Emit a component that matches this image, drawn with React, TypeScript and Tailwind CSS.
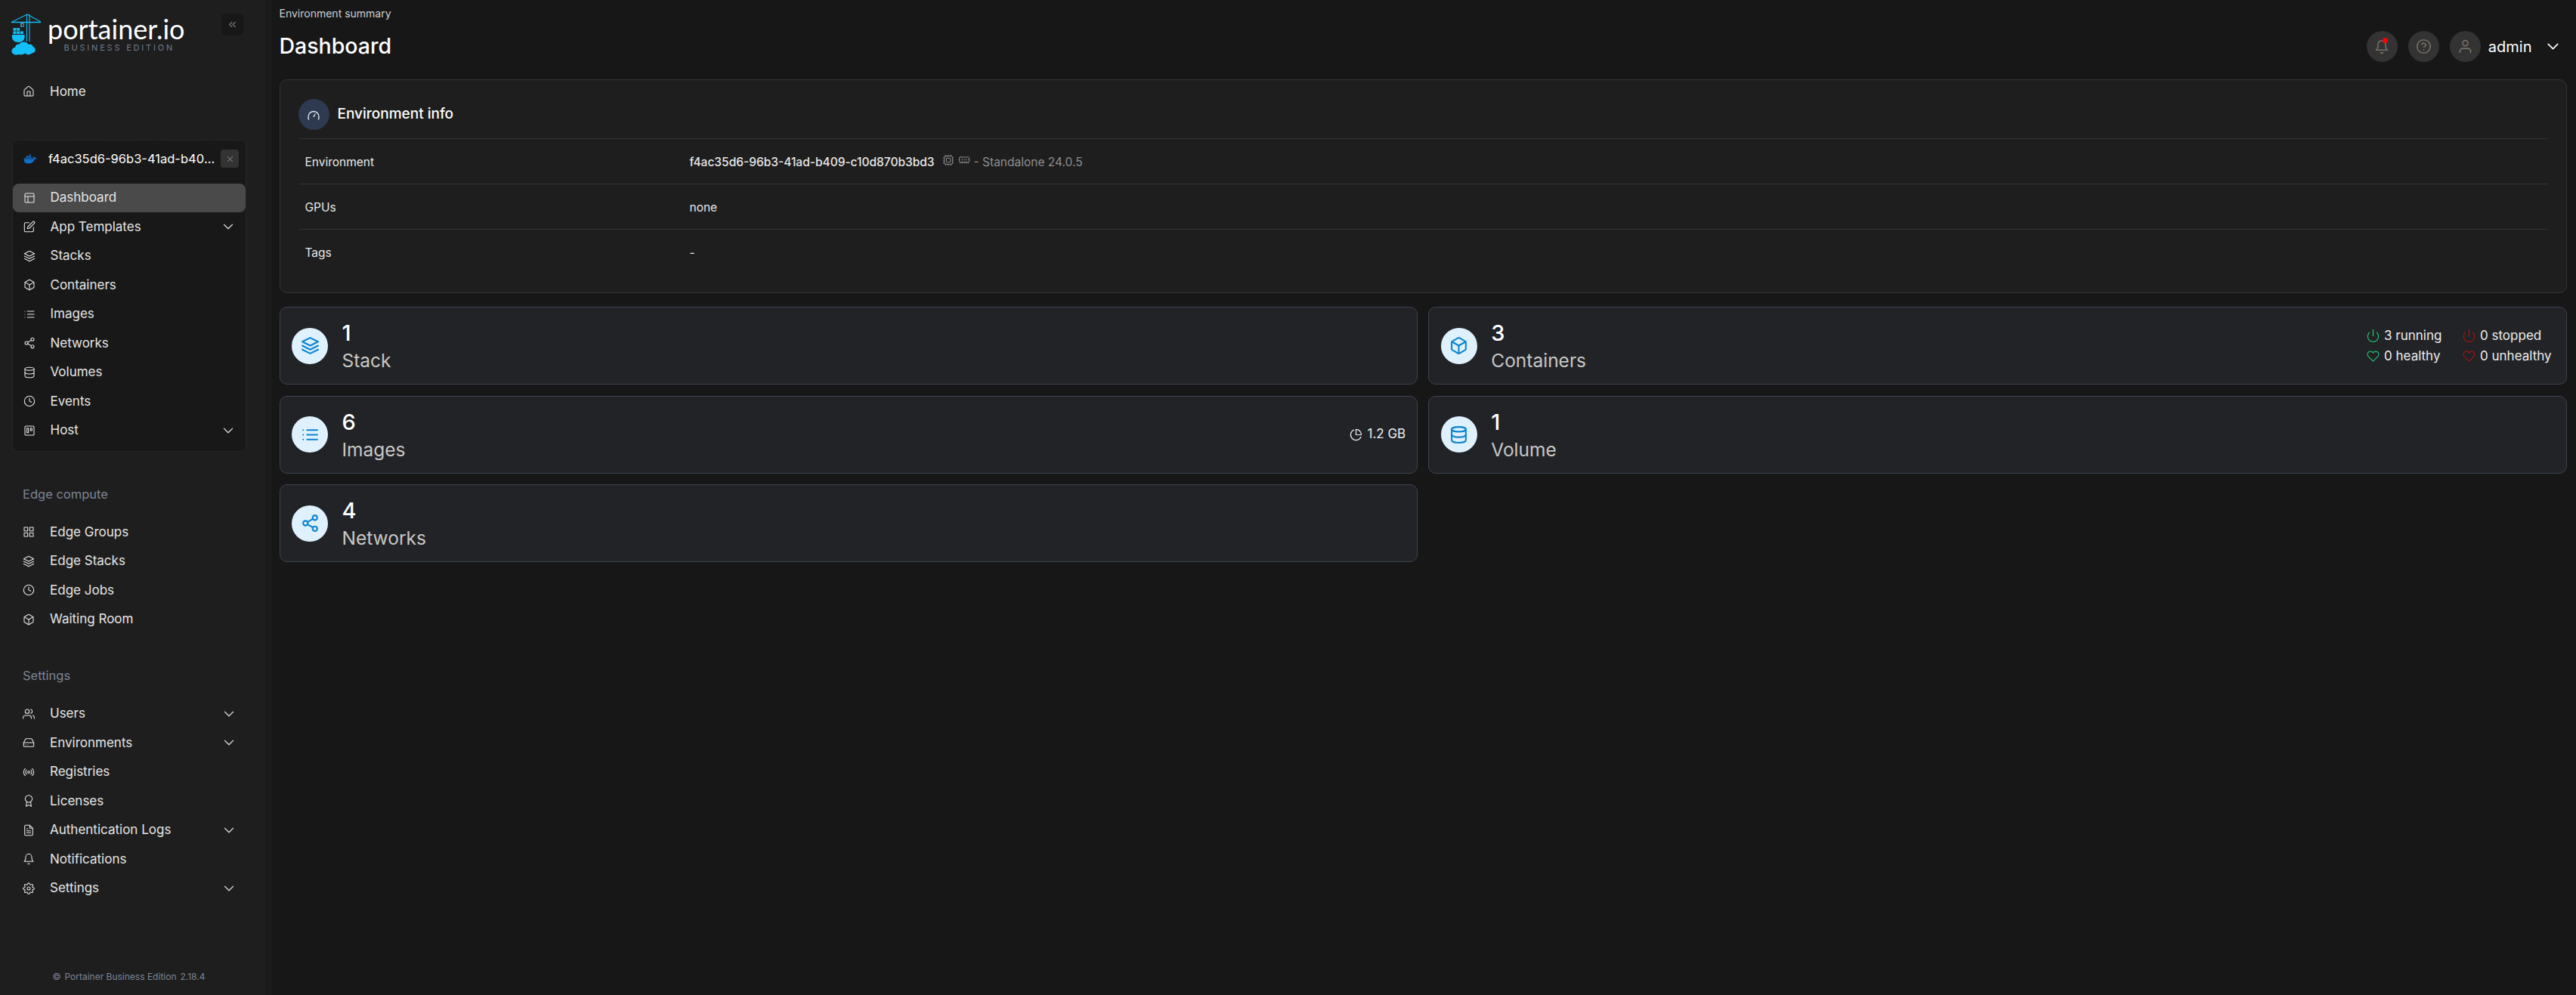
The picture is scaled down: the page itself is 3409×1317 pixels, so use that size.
import type { ReactNode } from "react";
import { Cpu, MemoryStick, House } from "lucide-react";
import { SiDocker } from "react-icons/si";
import {
  FiAward,
  FiBell,
  FiBox,
  FiChevronDown,
  FiChevronsLeft,
  FiClock,
  FiDatabase,
  FiEdit,
  FiFileText,
  FiGrid,
  FiHardDrive,
  FiHeart,
  FiHelpCircle,
  FiLayers,
  FiLayout,
  FiList,
  FiPieChart,
  FiPower,
  FiRadio,
  FiSettings,
  FiShare2,
  FiTrello,
  FiUser,
  FiUsers,
  FiX,
} from "react-icons/fi";

type IconType = React.ComponentType<{ className?: string; strokeWidth?: number }>;

function PortainerLogo() {
  return (
    <svg viewBox="0 0 40 55" className="h-[55px] w-[40px] shrink-0" fill="none">
      {/* crane */}
      <g stroke="#13bef9" strokeWidth="1.1">
        <path d="M0 11.500h39" strokeWidth="1.6" />
        <path d="M21 1 1 11M21 1l18 10" />
        <path d="M20.500 1v36M24 1v36" />
      </g>
      <path d="M13 12v6" stroke="#13bef9" strokeWidth="0.8" />
      <rect x="13" y="13" width="3.500" height="4" fill="none" stroke="#8fdcf8" strokeWidth="0.7" />
      {/* containers */}
      <g fill="#13bef9">
        <rect x="2.500" y="19" width="4" height="3.600" />
        <rect x="7.200" y="19" width="4" height="3.600" />
        <rect x="2.500" y="23.400" width="4" height="3.600" />
        <rect x="7.200" y="23.400" width="4" height="3.600" />
        <rect x="11.900" y="23.400" width="4" height="3.600" />
        {/* boat */}
        <path d="M1 28h16.500v3.500c0 3.500-3 6.500-8 6.500-5.500 0-8.500-3-8.500-6.500z" />
        {/* cloud */}
        <path d="M6 54.500c-3.500 0-5.500-2.500-5.500-5 0-2.500 2-4.500 4.500-4.800C5.500 41.500 8 40 10.500 40.500c1.500-2.500 4-3.500 7-3 2.500.4 4 1.500 5 3.200 3-.8 5.500.2 6.200 3 2 .8 3.300 2.400 3 4.800-.3 2.500-2.500 4-5 4-1 1.500-3 2-5 1.700-1.500-.2-2.700-1-3.500-1.700-2.500 1.800-5.500 2.400-8 1.500-1.300.4-2.700.5-4.700.5z" />
      </g>
    </svg>
  );
}

function GaugeIcon() {
  return (
    <svg viewBox="0 0 18 18" className="h-[18px] w-[18px]" fill="none" stroke="#e5e7eb" strokeWidth="1.4" strokeLinecap="round">
      <path d="M2.500 15C2 13.800 2 12.800 2 11.500 2 7.500 5.100 4.500 9 4.500s7 3 7 7c0 1.300-.1 2.300-.5 3.500" />
      <path d="M9 11.500 11 8" />
    </svg>
  );
}

function NavItem({
  icon: Icon,
  label,
  chevron,
  active,
  nested,
}: {
  icon: IconType;
  label: string;
  chevron?: boolean;
  active?: boolean;
  nested?: boolean;
}) {
  return (
    <div
      className={`flex h-[38.5px] items-center rounded-[8px] ${nested ? "pl-[14px] pr-[12.5px]" : "pl-[30px] pr-[37.5px]"} ${
        active ? "bg-[#4a4a4a]" : ""
      }`}
    >
      <Icon className="h-[16px] w-[16px] shrink-0 text-[#e6e6e6]" strokeWidth={1.6} />
      <span className={`flex-1 text-[17px] leading-none text-[#e6e6e6] ${nested ? "ml-[19.5px]" : "ml-[20px]"}`}>{label}</span>
      {chevron ? <FiChevronDown className="h-[22px] w-[22px] text-[#d8d8d8]" strokeWidth={1.4} /> : null}
    </div>
  );
}

function SectionLabel({ children }: { children: ReactNode }) {
  return <div className="pl-[30px] text-[16.5px] leading-none text-[#7d8596]">{children}</div>;
}

function InfoRow({ label, children, last }: { label: string; children: ReactNode; last?: boolean }) {
  return (
    <div className={`flex h-[60px] items-center pt-[2px] ${last ? "" : "border-b border-[#333333]"}`}>
      <div className="w-[518px] pl-[9px] text-[15.5px] text-[#e8e8e8]">{label}</div>
      <div className="flex items-center text-[15.5px] text-[#e8e8e8]">{children}</div>
    </div>
  );
}

function Stat({ icon: Icon, value, label, children }: { icon: IconType; value: number; label: string; children?: ReactNode }) {
  return (
    <div className="flex h-[103px] items-center rounded-[10px] border border-[#3d4250] bg-[#212327] pl-[15.5px] pr-[15px]">
      <div className="flex h-[48px] w-[48px] shrink-0 items-center justify-center rounded-full bg-[#dff1fd]">
        <Icon className="h-[25px] w-[25px] text-[#0a84d0]" strokeWidth={2} />
      </div>
      <div className="ml-[18.5px] flex flex-1 flex-col">
        <div className="text-[29px] font-medium leading-[34px] text-white">{value}</div>
        <div className="mt-[5px] text-[24.5px] leading-[28px] text-[#c9c7c4]">{label}</div>
      </div>
      {children}
    </div>
  );
}

function ContainerStat({
  icon: Icon,
  color,
  text,
  size,
  width,
}: {
  icon: IconType;
  color: string;
  text: string;
  size: string;
  width: string;
}) {
  return (
    <div className={`flex items-center whitespace-nowrap text-[17px] leading-[27px] text-[#eeeeee] ${width}`}>
      <span className="mr-[6px] flex w-[17px] shrink-0 justify-center">
        <Icon className={`shrink-0 ${size} ${color}`} strokeWidth={1.6} />
      </span>
      {text}
    </div>
  );
}

export default function App() {
  return (
    <div className="flex h-[1317px] w-[3409px] overflow-hidden bg-[#171717] font-['Inter',sans-serif]">
      {/* sidebar */}
      <aside className="flex h-full w-[351px] shrink-0 flex-col bg-[#1e1e1e]">
        <div className="flex h-[102px] items-start pl-[15px] pt-[18px]">
          <PortainerLogo />
          <div className="ml-[8px] flex flex-col items-center">
            <div className="mt-[2px] font-['Lato',sans-serif] text-[36px] leading-[36px] text-white">portainer.io</div>
            <div className="ml-[8px] mt-[2px] text-[11px] leading-none tracking-[2.8px] text-[#717b8e]">BUSINESS EDITION</div>
          </div>
          <button className="ml-auto mr-[29px] flex h-[29px] w-[29px] items-center justify-center rounded-[6px] bg-[#171717]">
            <FiChevronsLeft className="h-[15px] w-[15px] text-[#c4c4c4]" strokeWidth={1.6} />
          </button>
        </div>
        <NavItem icon={House} label="Home" />

        <div className="ml-[16px] mr-[25px] mt-[44px] h-[413px] rounded-[8px] border border-dotted border-[#333333] bg-[#181818]">
          <div className="flex h-[57px] items-center pb-[8px] pl-[14px] pr-[9px]">
            <SiDocker className="h-[17px] w-[18px] shrink-0 text-[#0e6fc7]" />
            <span className="ml-[15px] w-[227px] truncate text-[16.5px] text-white">f4ac35d6-96b3-41ad-b409-c10d870b3bd3</span>
            <span className="ml-auto flex h-[24px] w-[24px] items-center justify-center rounded-[4px] bg-[#333333]">
              <FiX className="h-[13px] w-[13px] text-[#9ea3ad]" strokeWidth={1.5} />
            </span>
          </div>
          <NavItem icon={FiLayout} label="Dashboard" active nested />
          <NavItem icon={FiEdit} label="App Templates" chevron nested />
          <NavItem icon={FiLayers} label="Stacks" nested />
          <NavItem icon={FiBox} label="Containers" nested />
          <NavItem icon={FiList} label="Images" nested />
          <NavItem icon={FiShare2} label="Networks" nested />
          <NavItem icon={FiDatabase} label="Volumes" nested />
          <NavItem icon={FiClock} label="Events" nested />
          <NavItem icon={FiTrello} label="Host" chevron nested />
        </div>

        <div className="mt-[48px]">
          <SectionLabel>Edge compute</SectionLabel>
        </div>
        <div className="mt-[23px]">
          <NavItem icon={FiGrid} label="Edge Groups" />
          <NavItem icon={FiLayers} label="Edge Stacks" />
          <NavItem icon={FiClock} label="Edge Jobs" />
          <NavItem icon={FiBox} label="Waiting Room" />
        </div>

        <div className="mt-[47px]">
          <SectionLabel>Settings</SectionLabel>
        </div>
        <div className="mt-[23px]">
          <NavItem icon={FiUsers} label="Users" chevron />
          <NavItem icon={FiHardDrive} label="Environments" chevron />
          <NavItem icon={FiRadio} label="Registries" />
          <NavItem icon={FiAward} label="Licenses" />
          <NavItem icon={FiFileText} label="Authentication Logs" chevron />
          <NavItem icon={FiBell} label="Notifications" />
          <NavItem icon={FiSettings} label="Settings" chevron />
        </div>

        <div className="mt-auto flex items-center justify-center pb-[18px] pr-[10px] text-[12px] leading-none text-[#7d8596]">
          <span>©</span>
          <span className="ml-[5px]">Portainer Business Edition</span>
          <span className="ml-[5px]">2.18.4</span>
        </div>
      </aside>
      <div className="h-full w-[9px] shrink-0 bg-[#1a1a1a]" />

      {/* main */}
      <main className="flex min-w-0 flex-1 flex-col pl-[9.5px] pr-[12px]">
        <header className="flex h-[105px] shrink-0 flex-col">
          <div className="mt-[9px] text-[14px] leading-[17px] text-[#d0d0d0]">Environment summary</div>
          <div className="mt-[15px] flex h-[41px] items-center">
            <h1 className="text-[28.5px] font-medium leading-none text-white">Dashboard</h1>
            <div className="ml-auto mr-[6.5px] flex items-center">
              <div className="relative flex h-[41px] w-[41px] items-center justify-center rounded-full bg-[#333333]">
                <FiBell className="h-[20px] w-[20px] text-[#7a7268]" strokeWidth={1.8} />
                <span className="absolute left-[21px] top-[9px] h-[7px] w-[7px] rounded-full bg-[#ff0000]" />
              </div>
              <div className="ml-[14px] flex h-[41px] w-[41px] items-center justify-center rounded-full bg-[#333333]">
                <FiHelpCircle className="h-[21px] w-[21px] text-[#7a7268]" strokeWidth={1.8} />
              </div>
              <div className="ml-[14px] flex h-[41px] w-[41px] items-center justify-center rounded-full bg-[#333333]">
                <FiUser className="h-[21px] w-[21px] text-[#7a7268]" strokeWidth={1.8} />
              </div>
              <span className="ml-[10px] text-[20px] leading-none text-white">admin</span>
              <FiChevronDown className="ml-[15px] h-[25px] w-[25px] text-white" strokeWidth={1.6} />
            </div>
          </div>
        </header>

        <section className="h-[283px] shrink-0 rounded-[10px] border border-[#333333] bg-[#1e1e1e] px-[24px]">
          <div className="flex h-[78px] items-center border-b border-[#333333] pt-[14px]">
            <div className="flex h-[41px] w-[41px] items-center justify-center rounded-full bg-[#2d3a50]">
              <GaugeIcon />
            </div>
            <span className="ml-[11px] text-[19px] font-medium text-white">Environment info</span>
          </div>
          <InfoRow label="Environment">
            <span className="font-medium">f4ac35d6-96b3-41ad-b409-c10d870b3bd3</span>
            <Cpu className="ml-[10.5px] mt-[-5px] h-[16px] w-[16px] text-[#8c8c8c]" strokeWidth={1.5} />
            <MemoryStick className="ml-[4.5px] mt-[-5px] h-[16px] w-[16px] text-[#8c8c8c]" strokeWidth={1.5} />
            <span className="ml-[5px] text-[#8f8f8f]">- Standalone 24.0.5</span>
          </InfoRow>
          <InfoRow label="GPUs">none</InfoRow>
          <InfoRow label="Tags" last>
            -
          </InfoRow>
        </section>

        <div className="mt-[18px] grid grid-cols-2 gap-x-[14px] gap-y-[14.5px]">
          <Stat icon={FiLayers} value={1} label="Stack" />
          <Stat icon={FiBox} value={3} label="Containers">
            <div className="mr-[7px] flex">
              <div className="flex flex-col">
                <ContainerStat icon={FiPower} color="text-[#22c36f]" size="h-[19px] w-[19px]" text="3 running" width="w-[127px]" />
                <ContainerStat icon={FiHeart} color="text-[#22c36f]" size="h-[17px] w-[17px]" text="0 healthy" width="w-[127px]" />
              </div>
              <div className="flex flex-col">
                <ContainerStat icon={FiPower} color="text-[#a3160f]" size="h-[19px] w-[19px]" text="0 stopped" width="w-[115px]" />
                <ContainerStat icon={FiHeart} color="text-[#a3160f]" size="h-[17px] w-[17px]" text="0 unhealthy" width="w-[115px]" />
              </div>
            </div>
          </Stat>
          <Stat icon={FiList} value={6} label="Images">
            <div className="flex items-center text-[17px] text-[#eeeeee]">
              <FiPieChart className="mr-[6px] h-[17px] w-[17px] text-[#eeeeee]" strokeWidth={1.7} />
              1.2 GB
            </div>
          </Stat>
          <Stat icon={FiDatabase} value={1} label="Volume" />
          <Stat icon={FiShare2} value={4} label="Networks" />
        </div>
      </main>
    </div>
  );
}
